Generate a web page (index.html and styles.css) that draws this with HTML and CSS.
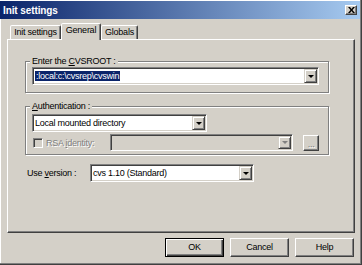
FILE: index.html
```html
<!DOCTYPE html>
<html lang="en">
<head>
    <meta charset="UTF-8">
    <meta name="viewport" content="width=device-width, initial-scale=1.0">
    <title>Init settings</title>
    <link rel="stylesheet" href="styles.css">
</head>
<body>
    <div class="window">
        <div class="titlebar">
            <span class="title">Init settings</span>
            <span class="close-btn">
                <svg width="7" height="6" viewBox="0 0 7 6"><path d="M0 0h2l1.5 2L5 0h2L4.5 3 7 6H5L3.5 4 2 6H0l2.5-3z" fill="#000"/></svg>
            </span>
        </div>
        <div class="client">
            <div class="tabs">
                <div class="tab tab-init">Init settings</div>
                <div class="tab tab-general active">General</div>
                <div class="tab tab-globals">Globals</div>
            </div>
            <div class="panel">
                <fieldset class="group group-root">
                    <legend>Enter the <u>C</u>VSROOT :</legend>
                    <div class="combo">
                        <span class="combo-value"><span class="selected">:local:c:\cvsrep\cvswin</span></span>
                        <span class="drop-btn"></span>
                    </div>
                </fieldset>
                <fieldset class="group group-auth">
                    <legend><u>A</u>uthentication :</legend>
                    <div class="combo combo-auth">
                        <span class="combo-value">Local mounted directory</span>
                        <span class="drop-btn"></span>
                    </div>
                    <div class="rsa-row">
                        <span class="checkbox"></span>
                        <span class="rsa-label disabled-text">RSA <u>i</u>dentity:</span>
                        <div class="combo combo-rsa disabled">
                            <span class="combo-value"></span>
                            <span class="drop-btn"></span>
                        </div>
                        <span class="browse-btn disabled-text">...</span>
                    </div>
                </fieldset>
                <div class="version-row">
                    <span class="version-label">Use <u>v</u>ersion :</span>
                    <div class="combo combo-version">
                        <span class="combo-value">cvs 1.10 (Standard)</span>
                        <span class="drop-btn"></span>
                    </div>
                </div>
            </div>
            <div class="buttons">
                <span class="btn default">OK</span>
                <span class="btn">Cancel</span>
                <span class="btn">Help</span>
            </div>
        </div>
    </div>
</body>
</html>
```

FILE: styles.css
```css
* {
    box-sizing: border-box;
}
body {
    margin: 0;
    font-family: "Liberation Sans", Arial, sans-serif;
    font-size: 9px;
    letter-spacing: -0.25px;
    color: #000;
}
.window {
    width: 362px;
    height: 265px;
    background-color: #d4d0c8; /* classic dialog gray */
    padding: 1px 2px 2px 0;
    display: flex;
    flex-direction: column;
    box-shadow: inset -1px -1px 0 #404040, inset -2px -2px 0 #808080, inset 1px 1px 0 #fff;
}
.titlebar {
    height: 18px;
    display: flex;
    align-items: center;
    justify-content: space-between;
    padding: 0 3px;
    background: linear-gradient(to right, #0a246a, #a6caf0);
}
.title {
    color: #fff;
    font-weight: bold;
    font-size: 10px;
    letter-spacing: -0.1px;
}
.close-btn {
    width: 12px;
    height: 10px;
    display: flex;
    align-items: center;
    justify-content: center;
    background-color: #d4d0c8;
    border: 1px solid;
    border-color: #fff #404040 #404040 #fff;
    box-shadow: inset -1px -1px 0 #808080;
}
.client {
    flex: 1;
    display: flex;
    flex-direction: column;
    padding: 0 5px 0 7px;
}

/* tabs */
.tabs {
    display: flex;
    align-items: flex-end;
    height: 16px;
    margin-top: 4px;
    padding-left: 3px;
}
.tab {
    height: 14px;
    line-height: 12px;
    text-align: center;
    border: 1px solid;
    border-bottom: 0;
    border-color: #fff #404040 transparent #fff;
    border-radius: 2px 2px 0 0;
    box-shadow: inset -1px 0 0 #808080;
    background-color: #d4d0c8;
}
.tab-init {
    width: 51px;
}
.tab-general {
    width: 40px;
}
.tab-globals {
    width: 37px;
}
.tab.active {
    height: 17px;
    margin-bottom: -1px;
    position: relative;
    z-index: 1;
}
.panel {
    height: 194px;
    border: 1px solid;
    border-color: #fff #404040 #404040 #fff;
    box-shadow: inset -1px -1px 0 #808080;
    padding: 16px 25px 0 17px;
    display: flex;
    flex-direction: column;
}

/* group boxes */
.group {
    margin: 0;
    min-width: 0;
    border: 1px solid #808080;
    box-shadow: inset 1px 1px 0 #fff, 1px 1px 0 #fff;
}
.group legend {
    padding: 0 2px;
    margin-left: -2px;
    line-height: 11px;
    background-color: #d4d0c8;
}
.group-root {
    padding: 0 9px 7px 6px;
}
.group-auth {
    margin-top: 8px;
    padding: 2px 9px 3px 6px;
}

/* combo boxes */
.combo {
    display: flex;
    height: 18px;
    padding: 1px;
    background-color: #fff;
    border: 1px solid;
    border-color: #808080 #fff #fff #808080;
    box-shadow: inset 1px 1px 0 #404040, inset -1px -1px 0 #d4d0c8;
}
.combo-value {
    flex: 1;
    padding-left: 1px;
    line-height: 14px;
    white-space: nowrap;
    overflow: hidden;
}
.selected {
    background-color: #0a246a;
    color: #fff;
    padding: 0 1px;
}
.drop-btn {
    width: 13px;
    display: flex;
    align-items: center;
    justify-content: center;
    background-color: #d4d0c8;
    border: 1px solid;
    border-color: #d4d0c8 #404040 #404040 #d4d0c8;
    box-shadow: inset 1px 1px 0 #fff, inset -1px -1px 0 #808080;
}
.drop-btn::after {
    content: "";
    border-top: 3px solid #000;
    border-left: 3px solid transparent;
    border-right: 3px solid transparent;
}
.combo.disabled {
    background-color: #d4d0c8;
}
.combo.disabled .drop-btn::after {
    border-top-color: #808080;
}
.combo-auth {
    width: 175px;
}
.combo-rsa {
    width: 184px;
    height: 17px;
}
.combo-version {
    width: 164px;
}

/* RSA row */
.rsa-row {
    display: flex;
    align-items: center;
    height: 17px;
    margin-top: 2px;
}
.checkbox {
    width: 10px;
    height: 10px;
    margin-left: 1px;
    background-color: #d4d0c8;
    border: 1px solid;
    border-color: #808080 #fff #fff #808080;
    box-shadow: inset 1px 1px 0 #404040, inset -1px -1px 0 #d4d0c8;
}
.rsa-label {
    width: 64px;
    margin-left: 3px;
}
.disabled-text {
    color: #808080;
    text-shadow: 1px 1px 0 #fff;
}
.browse-btn {
    width: 16px;
    height: 16px;
    margin-left: 10px;
    text-align: center;
    line-height: 16px;
    border: 1px solid;
    border-color: #fff #404040 #404040 #fff;
    box-shadow: inset -1px -1px 0 #808080;
}

/* version row */
.version-row {
    display: flex;
    align-items: center;
    margin-top: 9px;
}
.version-label {
    width: 63px;
    margin-left: 2px;
}

/* dialog buttons */
.buttons {
    display: flex;
    justify-content: flex-end;
    gap: 6px;
    margin-top: 5px;
    padding-right: 1px;
}
.btn {
    width: 59px;
    height: 19px;
    line-height: 17px;
    text-align: center;
    border: 1px solid;
    border-color: #fff #404040 #404040 #fff;
    box-shadow: inset -1px -1px 0 #808080;
}
.btn.default {
    border-color: #000;
    line-height: 17px;
    box-shadow: inset 1px 1px 0 #fff, inset -1px -1px 0 #404040, inset -2px -2px 0 #808080;
}
```
